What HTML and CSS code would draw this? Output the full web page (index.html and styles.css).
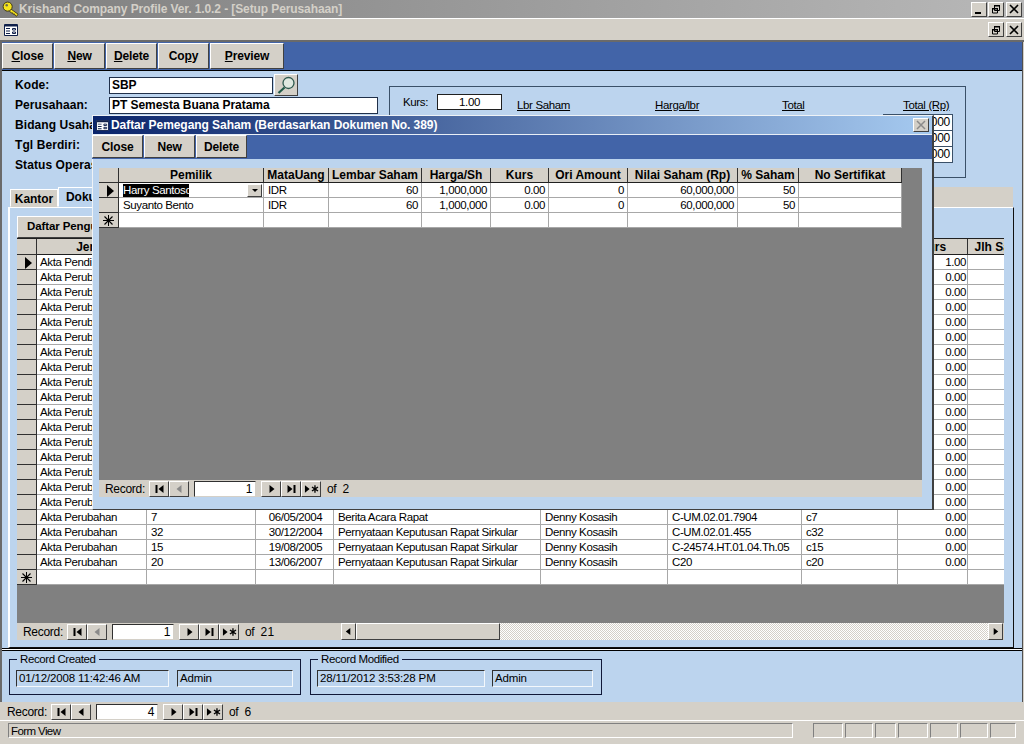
FILE: index.html
```html
<!DOCTYPE html>
<html lang="id">
<head>
<meta charset="utf-8">
<title>Krishand Company Profile</title>
<link rel="stylesheet" href="styles.css">
</head>
<body>
<svg class="defs" aria-hidden="true">
  <symbol id="i-first" viewBox="0 0 14 10"><path d="M3 1h2v8H3zM11 1v8L6 5z"/></symbol>
  <symbol id="i-prev" viewBox="0 0 14 10"><path d="M9 1v8L4 5z"/></symbol>
  <symbol id="i-next" viewBox="0 0 14 10"><path d="M5 1v8l5-4z"/></symbol>
  <symbol id="i-last" viewBox="0 0 14 10"><path d="M3 1v8l5-4zM9 1h2v8H9z"/></symbol>
  <symbol id="i-new" viewBox="0 0 16 10"><path d="M1 1v8l5-4zM11 1h1.400v2.600l2.200-1.300.7 1.200L13 5l2.300 1.500-.7 1.200-2.200-1.300V9H11V6.400L8.800 7.700l-.7-1.200L10.400 5 8.100 3.500l.7-1.200L11 3.600z"/></symbol>
  <symbol id="i-form" viewBox="0 0 14 12"><path fill="#fff" stroke="#10204a" d="M.5.5h13v11H.5z"/><path fill="#10204a" d="M1 1h12v1.500H1zM2 4h4v1H2zM2 6.500h4v1H2zM2 9h4v1H2z"/><path fill="none" stroke="#10204a" d="M8.500 4.500h3v1.500h-3zM8.500 8h3v1.500h-3z"/></symbol>
  <symbol id="i-star" viewBox="0 0 11 11"><path d="M5 0h1v11H5zM0 5h11v1H0z"/><path d="M1.500 1.500 9.500 9.500M9.500 1.500 1.500 9.500" stroke="#000" stroke-width="1.100"/></symbol>
</svg>

<header class="titlebar">
  <svg class="key" viewBox="0 0 18 16" aria-hidden="true"><path d="m8 7 9 6.500-1.500 2.200-1.700-1-.6-1.500-1.500.4-.5-1.500-1.500.1L7 9z" fill="#f6e41e" stroke="#3a3410" stroke-width=".9"/><circle cx="6" cy="5.500" r="4.800" fill="#f6e41e" stroke="#3a3410" stroke-width="1"/><circle cx="5" cy="4" r="1.300" fill="#6a6a50"/></svg>
  <span class="titletext">Krishand Company Profile Ver. 1.0.2 - [Setup Perusahaan]</span>
  <div class="winbtns">
    <span class="winbtn"><svg viewBox="0 0 10 10"><path d="M1 8h6v2H1z"/></svg></span>
    <span class="winbtn"><svg viewBox="0 0 10 10"><path fill="none" stroke="#000" d="M3.500 1.500h5v5h-5zM1.500 4.500h5v4.500h-5z"/><path d="M3 1h6v1.500H3zM1 4h6v1.500H1z"/></svg></span>
    <span class="winbtn gap"><svg viewBox="0 0 10 10"><path stroke="#000" stroke-width="1.600" d="m1 1 8 8M9 1 1 9"/></svg></span>
  </div>
</header>
<div class="menubar">
  <svg class="formicon"><use href="#i-form"/></svg>
  <div class="winbtns">
    <span class="winbtn"><svg viewBox="0 0 10 10"><path fill="none" stroke="#000" d="M3.500 1.500h5v5h-5zM1.500 4.500h5v4.500h-5z"/><path d="M3 1h6v1.500H3zM1 4h6v1.500H1z"/></svg></span>
    <span class="winbtn gap"><svg viewBox="0 0 10 10"><path stroke="#000" stroke-width="1.600" d="m1 1 8 8M9 1 1 9"/></svg></span>
  </div>
</div>

<main class="formwin">
  <div class="toolbar">
    <button class="tbtn"><u>C</u>lose</button>
    <button class="tbtn"><u>N</u>ew</button>
    <button class="tbtn"><u>D</u>elete</button>
    <button class="tbtn">Co<u>p</u>y</button>
    <button class="tbtn wide"><u>P</u>review</button>
  </div>

  <section class="formhead">
    <div class="fields">
      <div class="frow"><label class="flabel">Kode:</label><span class="input short">SBP</span>
        <button class="lookup"><svg viewBox="0 0 20 18" aria-hidden="true"><circle cx="12.500" cy="7" r="5.500" fill="#dfe8e0" stroke="#2f5a50" stroke-width="1.300"/><path d="M8.500 11.500 2.500 17" stroke="#1f5a48" stroke-width="2.200"/></svg></button></div>
      <div class="frow"><label class="flabel">Perusahaan:</label><span class="input long">PT Semesta Buana Pratama</span></div>
      <div class="frow"><label class="flabel">Bidang Usaha:</label></div>
      <div class="frow"><label class="flabel">Tgl Berdiri:</label></div>
      <div class="frow"><label class="flabel">Status Operasi:</label></div>
    </div>
    <div class="sharebox">
      <div class="sharehead">
        <div class="kurs"><span>Kurs:</span><span class="kursval">1.00</span></div>
        <u>Lbr Saham</u><u>Harga/lbr</u><u>Total</u><u>Total (Rp)</u>
      </div>
      <div class="totals">
        <span class="totalcell">60,000,000</span>
        <span class="totalcell">60,000,000</span>
        <span class="totalcell">120,000,000</span>
      </div>
    </div>
  </section>

  <div class="tabstrip">
    <span class="tab">Kantor</span>
    <span class="tab active">Dokumen</span>
    <span class="tabfill"></span>
  </div>

  <section class="tabpanel">
    <button class="subbtn">Daftar Pengurus</button>
    <div class="sheet main">
      <div class="sheetclip">
        <table class="grid gridmain">
          <colgroup><col class="m0"><col class="m1"><col class="m2"><col class="m3"><col class="m4"><col class="m5"><col class="m6"><col class="m7"><col class="m8"><col class="m9"></colgroup>
          <thead><tr><th class="sel"></th><th>Jenis</th><th>No</th><th>Tanggal</th><th>Keterangan</th><th>Notaris</th><th>No SK</th><th>File</th><th>Kurs</th><th>Jlh Saham</th></tr></thead>
          <tbody>
            <tr><td class="sel"><span class="marker"></span></td><td>Akta Pendirian</td><td></td><td></td><td></td><td></td><td></td><td></td><td class="num">1.00</td><td></td></tr>
            <tr><td class="sel"></td><td>Akta Perubahan</td><td></td><td></td><td></td><td></td><td></td><td></td><td class="num">0.00</td><td></td></tr>
            <tr><td class="sel"></td><td>Akta Perubahan</td><td></td><td></td><td></td><td></td><td></td><td></td><td class="num">0.00</td><td></td></tr>
            <tr><td class="sel"></td><td>Akta Perubahan</td><td></td><td></td><td></td><td></td><td></td><td></td><td class="num">0.00</td><td></td></tr>
            <tr><td class="sel"></td><td>Akta Perubahan</td><td></td><td></td><td></td><td></td><td></td><td></td><td class="num">0.00</td><td></td></tr>
            <tr><td class="sel"></td><td>Akta Perubahan</td><td></td><td></td><td></td><td></td><td></td><td></td><td class="num">0.00</td><td></td></tr>
            <tr><td class="sel"></td><td>Akta Perubahan</td><td></td><td></td><td></td><td></td><td></td><td></td><td class="num">0.00</td><td></td></tr>
            <tr><td class="sel"></td><td>Akta Perubahan</td><td></td><td></td><td></td><td></td><td></td><td></td><td class="num">0.00</td><td></td></tr>
            <tr><td class="sel"></td><td>Akta Perubahan</td><td></td><td></td><td></td><td></td><td></td><td></td><td class="num">0.00</td><td></td></tr>
            <tr><td class="sel"></td><td>Akta Perubahan</td><td></td><td></td><td></td><td></td><td></td><td></td><td class="num">0.00</td><td></td></tr>
            <tr><td class="sel"></td><td>Akta Perubahan</td><td></td><td></td><td></td><td></td><td></td><td></td><td class="num">0.00</td><td></td></tr>
            <tr><td class="sel"></td><td>Akta Perubahan</td><td></td><td></td><td></td><td></td><td></td><td></td><td class="num">0.00</td><td></td></tr>
            <tr><td class="sel"></td><td>Akta Perubahan</td><td></td><td></td><td></td><td></td><td></td><td></td><td class="num">0.00</td><td></td></tr>
            <tr><td class="sel"></td><td>Akta Perubahan</td><td></td><td></td><td></td><td></td><td></td><td></td><td class="num">0.00</td><td></td></tr>
            <tr><td class="sel"></td><td>Akta Perubahan</td><td></td><td></td><td></td><td></td><td></td><td></td><td class="num">0.00</td><td></td></tr>
            <tr><td class="sel"></td><td>Akta Perubahan</td><td></td><td></td><td></td><td></td><td></td><td></td><td class="num">0.00</td><td></td></tr>
            <tr><td class="sel"></td><td>Akta Perubahan</td><td></td><td></td><td></td><td></td><td></td><td></td><td class="num">0.00</td><td></td></tr>
            <tr><td class="sel"></td><td>Akta Perubahan</td><td>7</td><td class="ctr">06/05/2004</td><td>Berita Acara Rapat</td><td>Denny Kosasih</td><td>C-UM.02.01.7904</td><td>c7</td><td class="num">0.00</td><td></td></tr>
            <tr><td class="sel"></td><td>Akta Perubahan</td><td>32</td><td class="ctr">30/12/2004</td><td>Pernyataan Keputusan Rapat Sirkular</td><td>Denny Kosasih</td><td>C-UM.02.01.455</td><td>c32</td><td class="num">0.00</td><td></td></tr>
            <tr><td class="sel"></td><td>Akta Perubahan</td><td>15</td><td class="ctr">19/08/2005</td><td>Pernyataan Keputusan Rapat Sirkular</td><td>Denny Kosasih</td><td>C-24574.HT.01.04.Th.05</td><td>c15</td><td class="num">0.00</td><td></td></tr>
            <tr><td class="sel"></td><td>Akta Perubahan</td><td>20</td><td class="ctr">13/06/2007</td><td>Pernyataan Keputusan Rapat Sirkular</td><td>Denny Kosasih</td><td>C20</td><td>c20</td><td class="num">0.00</td><td></td></tr>
            <tr><td class="sel"><svg class="star"><use href="#i-star"/></svg></td><td></td><td></td><td></td><td></td><td></td><td></td><td></td><td></td><td></td></tr>
          </tbody>
        </table>
      </div>
      <div class="sheetnav">
        <div class="nav inner">
          <span class="navlabel">Record:</span>
          <span class="navbtn"><svg><use href="#i-first"/></svg></span>
          <span class="navbtn off"><svg><use href="#i-prev"/></svg></span>
          <span class="navinput">1</span>
          <span class="navbtn"><svg><use href="#i-next"/></svg></span>
          <span class="navbtn"><svg><use href="#i-last"/></svg></span>
          <span class="navbtn"><svg><use href="#i-new"/></svg></span>
          <span class="navof">of</span><span class="navcount">21</span>
        </div>
        <div class="hscroll">
          <span class="sbtn"><svg><use href="#i-prev"/></svg></span>
          <span class="thumb"></span>
          <span class="strack"></span>
          <span class="sbtn"><svg><use href="#i-next"/></svg></span>
        </div>
      </div>
    </div>
  </section>

  <div class="doubleline"></div>

  <section class="audit">
    <fieldset class="group created">
      <legend>Record Created</legend>
      <span class="sunken c1">01/12/2008 11:42:46 AM</span>
      <span class="sunken c2">Admin</span>
    </fieldset>
    <fieldset class="group modified">
      <legend>Record Modified</legend>
      <span class="sunken c3">28/11/2012 3:53:28 PM</span>
      <span class="sunken c4">Admin</span>
    </fieldset>
  </section>
</main>

<div class="nav outer">
  <span class="navlabel">Record:</span>
  <span class="navbtn"><svg><use href="#i-first"/></svg></span>
  <span class="navbtn"><svg><use href="#i-prev"/></svg></span>
  <span class="navinput">4</span>
  <span class="navbtn"><svg><use href="#i-next"/></svg></span>
  <span class="navbtn"><svg><use href="#i-last"/></svg></span>
  <span class="navbtn"><svg><use href="#i-new"/></svg></span>
  <span class="navof">of</span><span class="navcount">6</span>
</div>

<footer class="statusbar">
  <span class="statustext">Form View</span>
  <span class="seg s30"></span><span class="seg s28"></span><span class="seg s21"></span><span class="seg s30"></span><span class="seg s28"></span><span class="seg s28"></span><span class="seg s25"></span>
</footer>

<!-- floating dialog window -->
<div class="dialog">
  <div class="dlgtitle">
    <svg class="dlgicon"><use href="#i-form"/></svg>
    <span class="dlgtext">Daftar Pemegang Saham (Berdasarkan Dokumen No. 389)</span>
    <span class="dlgclose"><svg viewBox="0 0 10 10"><path stroke="#8a8a8a" stroke-width="1.500" d="m1 1 8 8M9 1 1 9"/></svg></span>
  </div>
  <div class="dlgtools">
    <button class="tbtn dbtn">Close</button>
    <button class="tbtn dbtn">New</button>
    <button class="tbtn dbtn">Delete</button>
  </div>
  <div class="dlgbody">
    <div class="sheet dlgsheet">
      <div class="sheetclip">
        <table class="grid griddlg">
          <colgroup><col class="d0"><col class="d1"><col class="d2"><col class="d3"><col class="d4"><col class="d5"><col class="d6"><col class="d7"><col class="d8"><col class="d9"></colgroup>
          <thead><tr><th class="sel"></th><th>Pemilik</th><th>MataUang</th><th>Lembar Saham</th><th>Harga/Sh</th><th>Kurs</th><th>Ori Amount</th><th>Nilai Saham (Rp)</th><th>% Saham</th><th>No Sertifikat</th></tr></thead>
          <tbody>
            <tr><td class="sel"><span class="marker"></span></td><td class="combo"><span class="selected">Harry Santosc</span><span class="dropbtn"><svg viewBox="0 0 8 5"><path d="M1 1h6L4 4z"/></svg></span></td><td>IDR</td><td class="num">60</td><td class="num">1,000,000</td><td class="num">0.00</td><td class="num">0</td><td class="num">60,000,000</td><td class="num">50</td><td></td></tr>
            <tr><td class="sel"></td><td>Suyanto Bento</td><td>IDR</td><td class="num">60</td><td class="num">1,000,000</td><td class="num">0.00</td><td class="num">0</td><td class="num">60,000,000</td><td class="num">50</td><td></td></tr>
            <tr><td class="sel"><svg class="star"><use href="#i-star"/></svg></td><td></td><td></td><td></td><td></td><td></td><td></td><td></td><td></td><td></td></tr>
          </tbody>
        </table>
      </div>
      <div class="sheetnav">
        <div class="nav inner dlgnav">
          <span class="navlabel">Record:</span>
          <span class="navbtn"><svg><use href="#i-first"/></svg></span>
          <span class="navbtn off"><svg><use href="#i-prev"/></svg></span>
          <span class="navinput">1</span>
          <span class="navbtn"><svg><use href="#i-next"/></svg></span>
          <span class="navbtn"><svg><use href="#i-last"/></svg></span>
          <span class="navbtn"><svg><use href="#i-new"/></svg></span>
          <span class="navof">of</span><span class="navcount">2</span>
        </div>
      </div>
    </div>
  </div>
</div>
</body>
</html>
```

FILE: styles.css
```css
* { box-sizing: border-box; }
html, body { margin: 0; padding: 0; }
body {
  width: 1024px; height: 744px; overflow: hidden; position: relative;
  background: #d4d0c8; color: #000;
  font: 12px/14px "Liberation Sans", Arial, sans-serif;
}
.defs { display: none; }
button { font: inherit; color: inherit; margin: 0; padding: 0; }

/* title + menu */
.titlebar {
  height: 18px; display: flex; align-items: center; padding-left: 2px;
  background: linear-gradient(90deg, #7f7f7f, #b8b8b8);
}
.key { width: 17px; height: 16px; flex: none; }
.titletext { color: #d4d0c8; font-weight: 700; font-size: 12px; letter-spacing: -.1px; white-space: nowrap; }
.winbtns { margin-left: auto; display: flex; gap: 1px; padding-right: 2px; }
.winbtn {
  width: 16px; height: 15px; display: flex; align-items: center; justify-content: center;
  background: #d4d0c8; border: 1px solid; border-color: #fff #404040 #404040 #fff;
}
.winbtn.gap { margin-left: 1px; }
.winbtn svg { width: 10px; height: 10px; }
.menubar {
  height: 24px; display: flex; align-items: center; padding-left: 4px;
  border-top: 1px solid #fff; border-bottom: 2px solid #6a6a6a;
}
.formicon { width: 14px; height: 12px; }

/* form window */
.formwin {
  width: 1023px; height: 660px;
  background: #bcd4ee; border-left: 2px solid #6a6a6a; border-right: 1px solid #505050;
  display: flex; flex-direction: column;
}
.toolbar {
  height: 29px; flex: none; display: flex; gap: 1px; padding-top: 1px;
  background: #4264a8; border-bottom: 1px solid #000;
}
.tbtn {
  width: 51px; height: 26px; background: #d4d0c8;
  border: 1px solid; border-color: #fff #404040 #404040 #fff;
  font-weight: 700; letter-spacing: -.15px;
}
.tbtn.wide { width: 74px; }

.formhead { height: 116px; flex: none; display: flex; }
.fields { width: 376px; margin-left: 13px; padding-top: 4px; flex: none; }
.frow { height: 20px; display: flex; align-items: center; }
.flabel { width: 94px; font-weight: 700; letter-spacing: .08px; white-space: nowrap; flex: none; }
.input {
  height: 17px; background: #fff; border: 1px solid; border-color: #202020 #e8eef6 #e8eef6 #202020;
  font-weight: 700; letter-spacing: -.05px; padding: 0 2px; line-height: 15px; outline: 1px solid #20304a; outline-offset: -1px;
}
.input.short { width: 164px; }
.input.long { width: 269px; }
.lookup {
  width: 24px; height: 22px; margin-left: 1px; background: #d4d0c8; flex: none;
  border: 1px solid; border-color: #fff #404040 #404040 #fff; display: flex; align-items: center; justify-content: center;
}
.lookup svg { width: 20px; height: 18px; }
.sharebox {
  width: 577px; height: 92px; margin: 15px 0 0 -2px; border: 1px solid #3a5068; flex: none;
  padding: 7px 0 0 13px;
  font-size: 11.5px; letter-spacing: -.35px;
}
.sharehead { display: grid; grid-template-columns: 114px 138px 127px 121px 50px; align-items: end; height: 18px; }
.kurs { display: flex; align-items: flex-start; gap: 10px; align-self: start; height: 16px; line-height: 16px; }
.kurs > span:first-child { width: 24px; }
.kursval {
  width: 65px; height: 16px; background: #fff; text-align: center; line-height: 14px;
  border: 1px solid #202020;
}
.totals { display: flex; flex-direction: column; width: 70px; margin: 2px 0 0 480px; }
.totalcell {
  height: 17px; background: #fff; border: 1px solid #3a5068; text-align: right; padding-right: 2px; line-height: 15px;
  margin-bottom: -1px; font-size: 12px; letter-spacing: -.3px;
}

/* tabs */
.tabstrip { height: 20px; flex: none; display: flex; width: 1011px; align-items: flex-end; padding-left: 8px; }
.tab {
  height: 18px; width: 48px; background: #d4d0c8; text-align: center; font-weight: 700; letter-spacing: -.05px;
  border: 1px solid; border-color: #fff #fff transparent #fff; line-height: 18px;
}
.tab.active { background: #bcd4ee; width: 120px; height: 20px; text-align: left; padding-left: 7px; border-color: #fff #404040 transparent #fff; line-height: 18px; }
.tabfill { flex: 1; height: 20px; background: #d4d0c8; }
.tabpanel {
  width: 1006px; height: 441px; flex: none; margin-left: 6px; padding: 8px 0 0 8px;
  border: 1px solid; border-color: #fff #101010 #101010 #fff; border-left-width: 2px;
}
.subbtn {
  display: block; width: 130px; height: 22px; background: #d4d0c8; margin-left: -1px;
  border: 1px solid; border-color: #fff #404040 #404040 #fff; font-weight: 700; font-size: 11.5px; letter-spacing: -.1px;
  text-align: left; padding: 0 0 2px 9px;
}
.doubleline { height: 3px; flex: none; border-top: 1px solid #000; border-bottom: 1px solid #000; background: #fff; }

/* datasheet */
.sheet { background: #808080; display: flex; flex-direction: column; position: relative; }
.sheet.main { width: 987px; height: 402px; margin-left: -1px; border-top: 1px solid #202020; }
.sheetclip { flex: 1; overflow: hidden; min-height: 0; }
.grid { border-collapse: separate; border-spacing: 0; table-layout: fixed; font-size: 11.5px; letter-spacing: -.39px; }
.gridmain { width: 1025px; }
.griddlg { width: 803px; }
.grid th, .grid td {
  padding: 1px 2px 0 4px; overflow: hidden; white-space: nowrap;
  height: 15px; line-height: 13px; background: #fff;
  border-right: 1px solid #a8a8a8; border-bottom: 1px solid #a8a8a8;
}
.gridmain td:nth-child(2) { padding-left: 3px; }
.grid th {
  height: 16px; padding: 1px 0 0; background: #d4d0c8; font-size: 12px; font-weight: 700; letter-spacing: 0; text-align: center;
  border-right: 1px solid #303030; border-bottom: 1px solid #202020;
}
.griddlg th { height: 15px; }
.grid .num { text-align: right; }
.gridmain .num { padding-right: 1px; }
.griddlg .num { padding-right: 3px; }
.grid .ctr { text-align: center; }
.grid .sel {
  background: #d4d0c8; padding: 0; text-align: center; position: relative;
  border-color: #303030;
}
.m0 { width: 20px; } .m1 { width: 110px; } .m2 { width: 109px; } .m3 { width: 78px; } .m4 { width: 207px; }
.m5 { width: 127px; } .m6 { width: 134px; } .m7 { width: 96px; } .m8 { width: 70px; } .m9 { width: 74px; }
.d0 { width: 20px; } .d1 { width: 145px; } .d2 { width: 65px; } .d3 { width: 93px; } .d4 { width: 69px; }
.d5 { width: 58px; } .d6 { width: 79px; } .d7 { width: 110px; } .d8 { width: 61px; } .d9 { width: 103px; }
.marker {
  display: block; width: 0; height: 0; margin: 1px auto 0 8px;
  border-left: 7px solid #000; border-top: 6px solid transparent; border-bottom: 6px solid transparent;
}
.star { width: 11px; height: 11px; display: block; margin: 1px auto 0; }
.combo { position: relative; }
.selected { background: #000; color: #fff; display: block; width: 66px; white-space: nowrap; line-height: 13px; }
.dropbtn {
  position: absolute; right: 1px; top: 1px; width: 15px; height: 13px; background: #d4d0c8;
  border: 1px solid; border-color: #fff #404040 #404040 #fff; display: flex; align-items: center; justify-content: center;
}
.dropbtn svg { width: 8px; height: 5px; }

/* record nav */
.sheetnav { height: 17px; flex: none; background: #d4d0c8; display: flex; }
.nav { display: flex; align-items: center; letter-spacing: -.3px; }
.nav.inner { width: 324px; flex: none; padding-left: 6px; }
.nav.outer { width: 1024px; height: 18px; padding: 1px 0 0 7px; }
.navlabel { width: 44px; flex: none; }
.navbtn {
  width: 20px; height: 16px; background: #d4d0c8; flex: none; display: flex; align-items: center; justify-content: center;
  border: 1px solid; border-color: #fff #404040 #404040 #fff;
}
.navbtn svg { width: 15px; height: 10px; }
.navbtn.off svg { fill: #8a8a8a; }
.navinput {
  width: 62px; height: 16px; margin: 0 5px; background: #fff; text-align: right; padding-right: 3px; line-height: 15px; flex: none;
  border: 1px solid; border-color: #303030 #d4d0c8 #d4d0c8 #303030;
}
.navof { margin-left: 6px; }
.navcount { margin-left: 6px; letter-spacing: .3px; }
.hscroll { flex: 1; display: flex; margin-right: 1px; }
.sbtn {
  width: 15px; height: 17px; flex: none; background: #d4d0c8; display: flex; align-items: center; justify-content: center;
  border: 1px solid; border-color: #fff #404040 #404040 #fff;
}
.sbtn svg { width: 13px; height: 9px; }
.thumb { width: 144px; background: #d4d0c8; border: 1px solid; border-color: #fff #404040 #404040 #fff; flex: none; }
.strack { flex: 1; background: repeating-conic-gradient(#d4d0c8 0 25%, #fff 0 50%) 0 0 / 2px 2px; }

/* footer of form */
.audit { flex: 1; display: flex; padding: 1px 0 0 7px; gap: 9px; font-size: 11.5px; }
.group {
  margin: 0; height: 43px; border: 1px solid #101838; padding: 4px 0 0 6px; display: flex; gap: 8px; align-items: flex-start;
  min-width: 0;
}
.group.created { width: 292px; }
.group.modified { width: 292px; gap: 7px; }
.group legend { margin-left: 1px; padding: 0 3px; letter-spacing: -.4px; line-height: 14px; }
.sunken {
  height: 17px; border: 1px solid; border-color: #303030 #f4f8fc #f4f8fc #303030; padding-left: 2px; line-height: 15px; letter-spacing: -.15px;
}
.c1 { width: 153px; } .c2 { width: 116px; } .c3 { width: 168px; } .c4 { width: 101px; }

/* status */
.statusbar {
  height: 23px; display: flex; align-items: flex-start; gap: 2px; padding: 2px 8px 0 8px;
  border-top: 1px solid #fff;
}
.statustext {
  width: 786px; height: 15px; margin-right: 18px; line-height: 14px; padding-left: 2px; letter-spacing: -.6px; font-size: 11.5px;
  border: 1px solid; border-color: #808080 #fff #fff #808080;
}
.seg { height: 15px; border: 1px solid; border-color: #808080 #fff #fff #808080; flex: none; }
.s30 { width: 30px; } .s28 { width: 28px; } .s21 { width: 21px; } .s25 { width: 26px; }

/* dialog */
.dialog {
  position: absolute; left: 92px; top: 115px; width: 842px; height: 395px;
  background: #bcd4ee; border: 1px solid; border-color: #eef2f6 #404040 #404040 #eef2f6; border-right-width: 2px;
}
.dlgtitle {
  height: 18px; display: flex; align-items: center; padding-left: 3px; color: #fff; font-weight: 700; letter-spacing: -.06px;
  background: linear-gradient(90deg, #0a246a, #a6caf0);
}
.dlgicon { width: 13px; height: 11px; flex: none; }
.dlgtext { margin-left: 2px; white-space: nowrap; }
.dlgclose {
  margin: 0 3px 0 auto; width: 16px; height: 14px; background: #d4d0c8; display: flex; align-items: center; justify-content: center;
  border: 1px solid; border-color: #fff #404040 #404040 #fff;
}
.dlgclose svg { width: 10px; height: 10px; }
.dlgtools { height: 25px; background: #4264a8; display: flex; gap: 1px; padding-top: 0; border-top: 1px solid #e8eef6; margin-left: -1px; }
.tbtn.dbtn { height: 23px; }
.dlgbody { padding: 9px 0 0 6px; }
.sheet.dlgsheet { width: 823px; height: 329px; }
```
